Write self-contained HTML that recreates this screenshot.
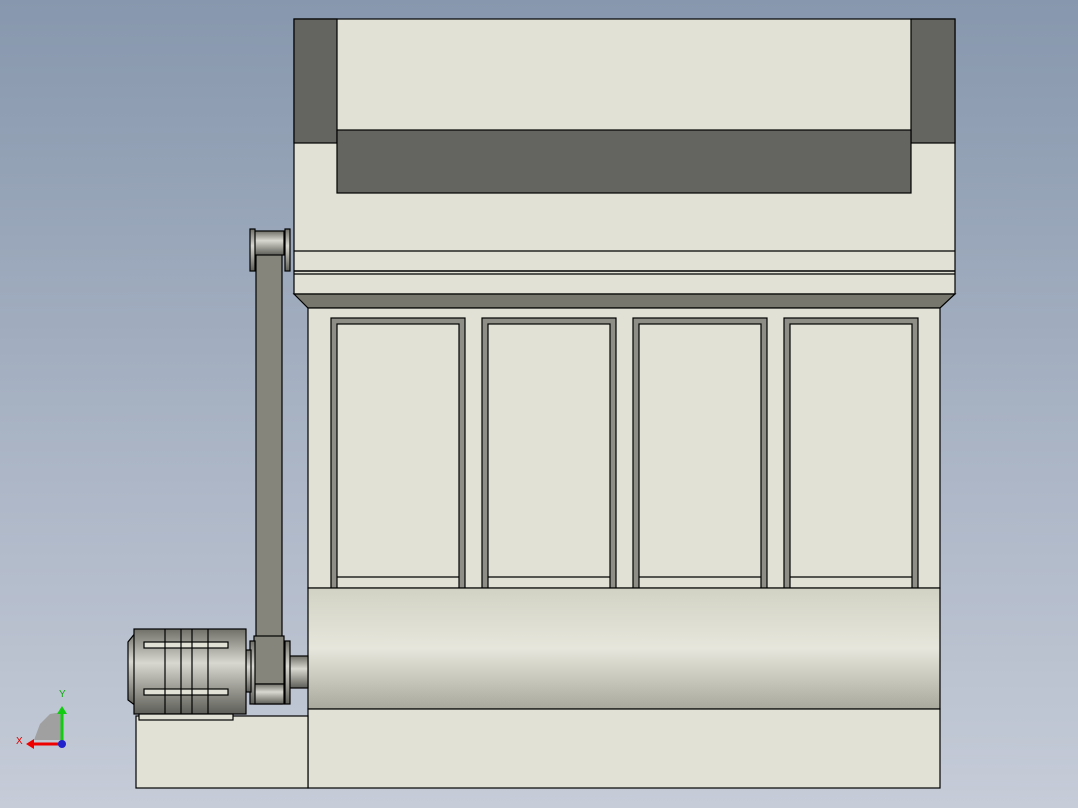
<!DOCTYPE html><html><head><style>html,body{margin:0;padding:0}body{width:1078px;height:808px;overflow:hidden;background:linear-gradient(#8797ad,#c6ccd8)}</style></head><body>
<svg width="1078" height="808" viewBox="0 0 1078 808" xmlns="http://www.w3.org/2000/svg" style="position:absolute;left:0;top:0">
<defs>
<linearGradient id="cyl" x1="0" y1="0" x2="0" y2="1"><stop offset="0" stop-color="#d2d2c4"/><stop offset="0.5" stop-color="#e6e6dc"/><stop offset="1" stop-color="#a9a99d"/></linearGradient>
<linearGradient id="met" x1="0" y1="0" x2="0" y2="1"><stop offset="0" stop-color="#707068"/><stop offset="0.4" stop-color="#d8d8d0"/><stop offset="1" stop-color="#5e5e58"/></linearGradient>
</defs>
<g stroke="#000" stroke-width="1.2">
<rect x="294" y="19" width="661" height="275" fill="#e1e1d6"/>
<rect x="294" y="19" width="43" height="124" fill="#646461"/>
<rect x="911" y="19" width="44" height="124" fill="#646461"/>
<rect x="337" y="130" width="574" height="63" fill="#646461"/>
<line x1="294" y1="251" x2="955" y2="251"/>
<line x1="294" y1="271" x2="955" y2="271" stroke-width="1.6"/>
<line x1="294" y1="274" x2="955" y2="274"/>
<polygon points="294,294 955,294 940,308 308,308" fill="#77776d"/>
<rect x="308" y="308" width="632" height="280" fill="#e1e1d6"/>
<g fill="#8e8e86">
<rect x="331" y="318" width="134" height="270"/><rect x="482" y="318" width="134" height="270"/><rect x="633" y="318" width="134" height="270"/><rect x="784" y="318" width="134" height="270"/>
</g>
<g fill="#e1e1d6">
<rect x="337" y="324" width="122" height="264"/><rect x="488" y="324" width="122" height="264"/><rect x="639" y="324" width="122" height="264"/><rect x="790" y="324" width="122" height="264"/>
</g>
<line x1="337" y1="577" x2="459" y2="577"/><line x1="488" y1="577" x2="610" y2="577"/><line x1="639" y1="577" x2="761" y2="577"/><line x1="790" y1="577" x2="912" y2="577"/>
<rect x="308" y="588" width="632" height="121" fill="url(#cyl)"/>
<rect x="308" y="709" width="632" height="79" fill="#e1e1d6"/>
<rect x="136" y="716" width="172" height="72" fill="#e1e1d6"/>
<rect x="282" y="656" width="26" height="32" fill="url(#met)"/>
<rect x="256" y="234" width="26" height="470" fill="#85857b"/>
<rect x="254" y="231" width="30" height="24" fill="url(#met)"/>
<rect x="250" y="229" width="5" height="42" fill="url(#met)"/><rect x="285" y="229" width="5" height="42" fill="url(#met)"/>
<rect x="254" y="636" width="30" height="48" fill="#85857b"/>
<rect x="254" y="684" width="30" height="20" fill="url(#met)"/>
<rect x="250" y="641" width="5" height="63" fill="url(#met)"/><rect x="285" y="641" width="5" height="63" fill="url(#met)"/>
<rect x="246" y="650" width="5" height="42" fill="url(#met)"/>
<polygon points="136,632 128,642 128,700 136,706" fill="url(#met)"/>
<rect x="134" y="629" width="112" height="85" fill="url(#met)"/>
<rect x="139" y="714" width="94" height="6" fill="#e1e1d6"/>
<rect x="144" y="642" width="84" height="6" fill="#e1e1d6"/>
<rect x="144" y="689" width="84" height="6" fill="#e1e1d6"/>
<line x1="165" y1="629" x2="165" y2="714"/><line x1="181" y1="629" x2="181" y2="714"/><line x1="192" y1="629" x2="192" y2="714"/><line x1="208" y1="629" x2="208" y2="714"/>
</g>
<g font-family="Liberation Sans,sans-serif" font-size="10">
<polygon points="34,740 62,740 62,712 50,714 40,724" fill="#a0a0a0"/>
<line x1="62" y1="744" x2="30" y2="744" stroke="#e00" stroke-width="3"/><polygon points="26,744 34,739 34,749" fill="#e00"/>
<line x1="62" y1="744" x2="62" y2="712" stroke="#1c1" stroke-width="3"/><polygon points="62,706 57,714 67,714" fill="#1c1"/>
<circle cx="62" cy="744" r="4" fill="#22c"/>
<text x="16" y="744" fill="#d00">X</text><text x="59" y="697" fill="#1a1">Y</text>
</g>
</svg></body></html>
